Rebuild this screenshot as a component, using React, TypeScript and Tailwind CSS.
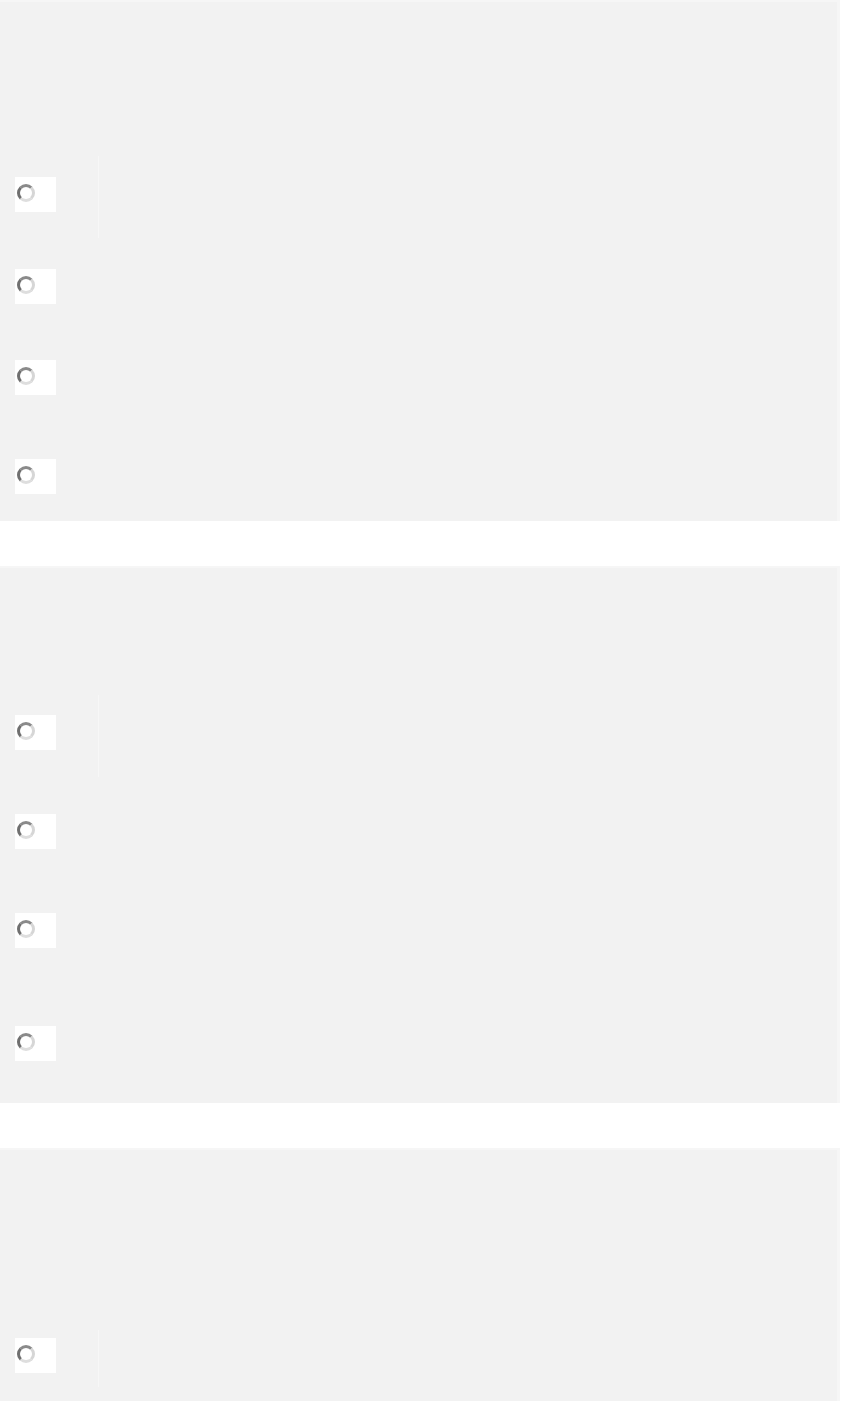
function Radio() {
  return (
    <div className="w-[41px] h-[35px] bg-white flex items-start pl-[2px] pt-[7px] shrink-0">
      <div className="w-[18px] h-[18px] rounded-full border-[3px] border-t-[#8a8a8a] border-l-[#6f6f6f] border-r-[#d6d6d6] border-b-[#dedede] bg-white" />
    </div>
  );
}

function FirstRow({ height, offset }: { height: string; offset: string }) {
  return (
    <div className={`flex ${height}`}>
      <div className={`ml-[15px] ${offset}`}>
        <Radio />
      </div>
      <div className="ml-[42px] w-px h-full bg-[#f7f7f7]" />
    </div>
  );
}

function Row({ gap }: { gap: string }) {
  return (
    <div className={`flex ml-[15px] ${gap}`}>
      <Radio />
    </div>
  );
}

export default function App() {
  return (
    <div className="min-h-screen bg-white flex flex-col gap-[45px] overflow-hidden">
      <section className="w-[840px] bg-[#f2f2f2] border-t-2 border-r-[3px] border-[#f6f6f6] pt-[154px] pb-[27px] flex flex-col">
        <FirstRow height="h-[82px]" offset="pt-[21px]" />
        <Row gap="mt-[31px]" />
        <Row gap="mt-[56px]" />
        <Row gap="mt-[64px]" />
      </section>

      <section className="w-[840px] bg-[#f2f2f2] border-t-2 border-r-[3px] border-[#f6f6f6] pt-[127px] pb-[42px] flex flex-col">
        <FirstRow height="h-[82px]" offset="pt-[20px]" />
        <Row gap="mt-[37px]" />
        <Row gap="mt-[64px]" />
        <Row gap="mt-[78px]" />
      </section>

      <section className="w-[840px] bg-[#f2f2f2] border-t-2 border-r-[3px] border-[#f6f6f6] pt-[180px] pb-[60px] flex flex-col">
        <FirstRow height="h-[57px]" offset="pt-[8px]" />
      </section>
    </div>
  );
}
